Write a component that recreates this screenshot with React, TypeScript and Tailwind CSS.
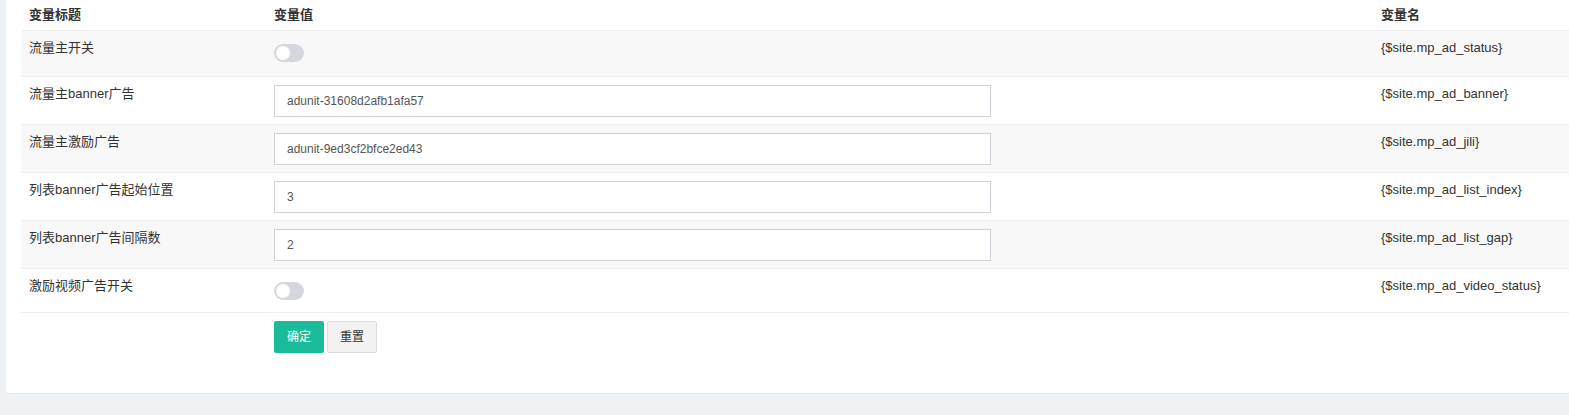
const rows: { title: string; kind: "switch" | "input"; value?: string; name: string; h: string }[] = [
    { title: "流量主开关", kind: "switch", name: "{$site.mp_ad_status}", h: "h-[46px]" },
    { title: "流量主banner广告", kind: "input", value: "adunit-31608d2afb1afa57", name: "{$site.mp_ad_banner}", h: "h-[48px]" },
    { title: "流量主激励广告", kind: "input", value: "adunit-9ed3cf2bfce2ed43", name: "{$site.mp_ad_jili}", h: "h-[48px]" },
    { title: "列表banner广告起始位置", kind: "input", value: "3", name: "{$site.mp_ad_list_index}", h: "h-[48px]" },
    { title: "列表banner广告间隔数", kind: "input", value: "2", name: "{$site.mp_ad_list_gap}", h: "h-[48px]" },
    { title: "激励视频广告开关", kind: "switch", name: "{$site.mp_ad_video_status}", h: "h-[44px]" },
];

function Toggle() {
    return (
        <div className="mt-[5px] w-[30px] h-[18px] rounded-full bg-[#d4d7de] flex items-center pl-[2px]">
            <div className="w-[14px] h-[14px] rounded-full bg-white" />
        </div>
    );
}

export default function App() {
    return (
        <div
            className="w-[1569px] h-[415px] bg-[#eff2f5] overflow-hidden text-[13px] text-[#333]"
            style={{ fontFamily: '"Liberation Sans", Arial, "Noto Sans CJK SC", sans-serif' }}
        >
            <div className="ml-[6px] h-[393px] bg-white rounded-bl-[3px] shadow-[0_1px_1px_rgba(0,0,0,0.05)] pl-[15px]">
                {/* Header */}
                <div className="flex h-[30px] items-center font-bold">
                    <div className="w-[245px] pl-2">变量标题</div>
                    <div className="w-[1107px] pl-2">变量值</div>
                    <div className="flex-1 pl-2">变量名</div>
                </div>

                {rows.map((row, idx) => (
                    <div
                        key={row.name}
                        className={`flex ${row.h} border-t border-[#eeeeee] ${idx % 2 === 0 ? "bg-[#f8f8f8]" : "bg-white"}`}
                    >
                        <div className="w-[245px] pl-2 pt-[9px] leading-[16px]">{row.title}</div>
                        <div className="w-[1107px] pl-2 pt-2">
                            {row.kind === "switch" ? (
                                <Toggle />
                            ) : (
                                <div className="w-[717px] h-[32px] border border-[#d2d1d9] bg-white flex items-center px-3 text-[12px] text-[#555]">
                                    {row.value}
                                </div>
                            )}
                        </div>
                        <div className="flex-1 pl-2 pt-[9px] leading-[16px]">{row.name}</div>
                    </div>
                ))}

                {/* Actions */}
                <div className="border-t border-[#eeeeee] flex pt-2">
                    <div className="w-[245px]" />
                    <div className="pl-2 flex gap-[3px]">
                        <button className="w-[50px] h-[32px] rounded-[2px] bg-[#1abc9c] text-white text-[12px]">确定</button>
                        <button className="w-[50px] h-[32px] rounded-[2px] bg-[#f2f2f2] border border-[#dcdcdc] text-[#333] text-[12px]">重置</button>
                    </div>
                </div>
            </div>
        </div>
    );
}
